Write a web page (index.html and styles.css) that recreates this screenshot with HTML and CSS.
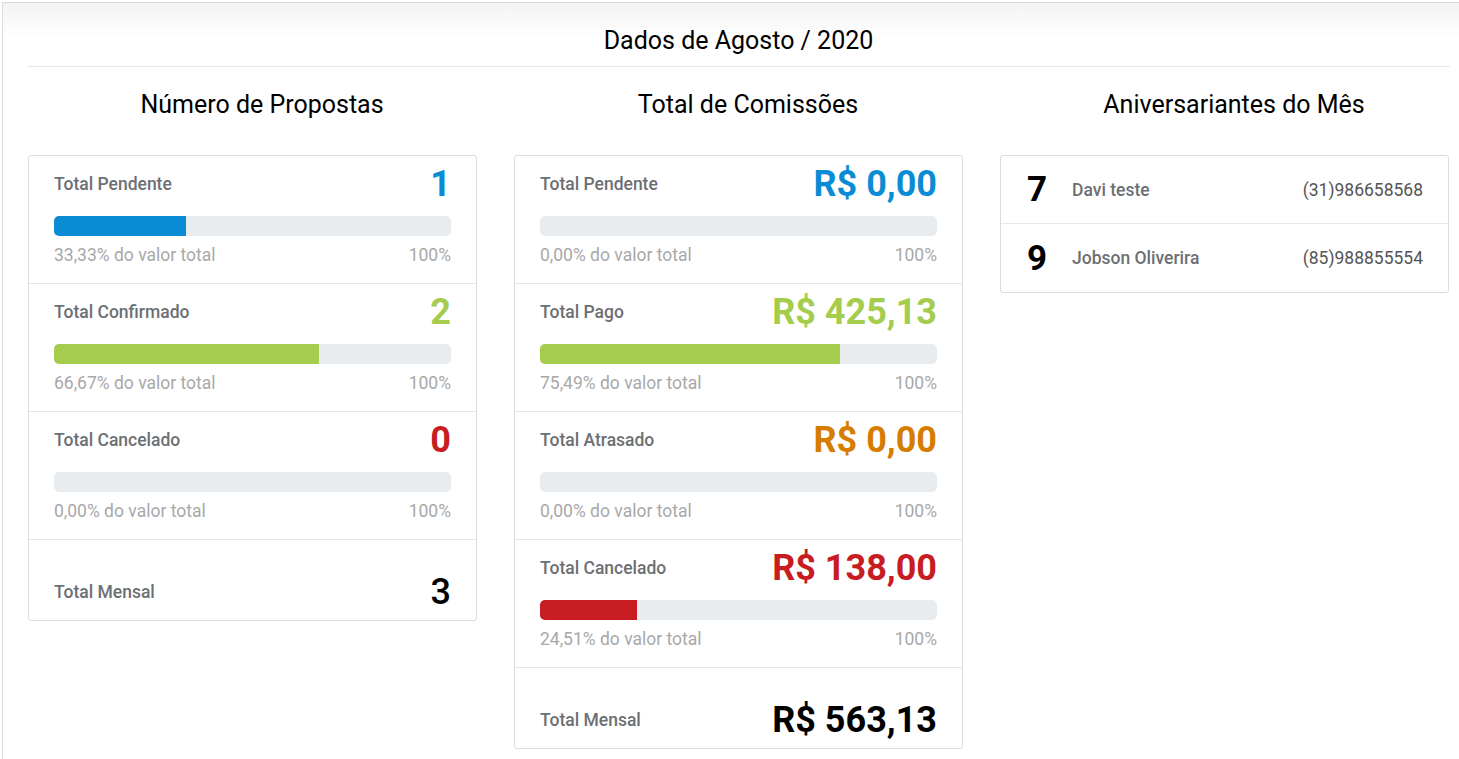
FILE: index.html
```html
<!DOCTYPE html>
<html lang="pt-BR">
<head>
<meta charset="utf-8">
<title>Dados de Agosto / 2020</title>
<link rel="stylesheet" href="styles.css">
</head>
<body>
<div class="frame">
  <div class="frame-title">Dados de Agosto / 2020</div>
  <div class="columns">
    <section class="col">
      <h2 class="col-title">Número de Propostas</h2>
      <div class="card">
        <div class="row">
          <div class="row-head"><span class="label">Total Pendente</span><span class="value blue">1</span></div>
          <div class="bar"><div class="fill bg-blue" style="width:33.33%"></div></div>
          <div class="row-foot"><span>33,33% do valor total</span><span>100%</span></div>
        </div>
        <div class="row">
          <div class="row-head"><span class="label">Total Confirmado</span><span class="value green">2</span></div>
          <div class="bar"><div class="fill bg-green" style="width:66.67%"></div></div>
          <div class="row-foot"><span>66,67% do valor total</span><span>100%</span></div>
        </div>
        <div class="row">
          <div class="row-head"><span class="label">Total Cancelado</span><span class="value red">0</span></div>
          <div class="bar"><div class="fill bg-red" style="width:0%"></div></div>
          <div class="row-foot"><span>0,00% do valor total</span><span>100%</span></div>
        </div>
        <div class="row total">
          <span class="label">Total Mensal</span><span class="value total-count">3</span>
        </div>
      </div>
    </section>
    <section class="col">
      <h2 class="col-title">Total de Comissões</h2>
      <div class="card">
        <div class="row">
          <div class="row-head"><span class="label">Total Pendente</span><span class="value blue">R$ 0,00</span></div>
          <div class="bar"><div class="fill bg-blue" style="width:0%"></div></div>
          <div class="row-foot"><span>0,00% do valor total</span><span>100%</span></div>
        </div>
        <div class="row">
          <div class="row-head"><span class="label">Total Pago</span><span class="value green">R$ 425,13</span></div>
          <div class="bar"><div class="fill bg-green" style="width:75.49%"></div></div>
          <div class="row-foot"><span>75,49% do valor total</span><span>100%</span></div>
        </div>
        <div class="row">
          <div class="row-head"><span class="label">Total Atrasado</span><span class="value orange">R$ 0,00</span></div>
          <div class="bar"><div class="fill bg-orange" style="width:0%"></div></div>
          <div class="row-foot"><span>0,00% do valor total</span><span>100%</span></div>
        </div>
        <div class="row">
          <div class="row-head"><span class="label">Total Cancelado</span><span class="value red">R$ 138,00</span></div>
          <div class="bar"><div class="fill bg-red" style="width:24.51%"></div></div>
          <div class="row-foot"><span>24,51% do valor total</span><span>100%</span></div>
        </div>
        <div class="row total">
          <span class="label">Total Mensal</span><span class="value total-money">R$ 563,13</span>
        </div>
      </div>
    </section>
    <section class="col">
      <h2 class="col-title">Aniversariantes do Mês</h2>
      <div class="card">
        <div class="bday">
          <span class="day">7</span><span class="name">Davi teste</span><span class="phone">(31)986658568</span>
        </div>
        <div class="bday">
          <span class="day">9</span><span class="name">Jobson Oliverira</span><span class="phone">(85)988855554</span>
        </div>
      </div>
    </section>
  </div>
</div>
</body>
</html>
```

FILE: styles.css
```css
* { box-sizing: border-box; }
html, body { margin: 0; padding: 0; }
body {
  background: #fff;
  font-family: Roboto, "Liberation Sans", Arial, sans-serif;
  color: #000;
  overflow: hidden;
}
.frame {
  margin: 2px 0 0 2px;
  width: 1472px;
  height: 757px;
  overflow: hidden;
  border: 1px solid #dcdcdc;
  border-right: none;
  border-bottom: none;
  padding: 0 25px;
  background: linear-gradient(to bottom, #f3f3f3 0px, #ffffff 36px);
}
.frame-title {
  height: 64px;
  padding-top: 23px;
  text-align: center;
  font-size: 25px;
  line-height: 29px;
  border-bottom: 1px solid #e6e6e6;
  margin: 0 -1px;
}
.columns {
  display: grid;
  grid-template-columns: 449px 449px 449px;
  column-gap: 37px;
}
.col-title {
  margin: 25px 0 37px;
  padding-left: 19px;
  font-size: 25px;
  font-weight: 400;
  line-height: 26px;
  text-align: center;
}
.card {
  border: 1px solid #dcdcdc;
  border-radius: 3px;
  background: #fff;
}
.row {
  height: 128px;
  padding: 6px 25px 0;
  border-bottom: 1px solid #e6e6e6;
}
.row:last-child { border-bottom: none; }
.row-head {
  display: flex;
  justify-content: space-between;
  align-items: center;
  height: 44px;
}
.label {
  font-size: 17.5px;
  font-weight: 500;
  color: #6c6f74;
}
.value {
  font-size: 36px;
  font-weight: 700;
  line-height: 44px;
}
.blue { color: #0a8cd4; }
.green { color: #a4cd4d; }
.orange { color: #d67d00; }
.red { color: #c71c22; }
.bar {
  margin-top: 10px;
  height: 20px;
  border-radius: 5px;
  background: #e9ecef;
  overflow: hidden;
}
.fill { height: 100%; }
.bg-blue { background: #0a8cd4; }
.bg-green { background: #a4cd4d; }
.bg-orange { background: #d67d00; }
.bg-red { background: #c71c22; }
.row-foot {
  display: flex;
  justify-content: space-between;
  margin-top: 7px;
  font-size: 17.5px;
  line-height: 24px;
  color: #a8a8a8;
}
.row.total {
  height: 80px;
  display: flex;
  justify-content: space-between;
  align-items: center;
  padding-top: 24px;
  padding-bottom: 0;
}
.total-count { font-weight: 500; color: #000; }
.total-money { font-weight: 700; color: #000; }
.bday {
  display: flex;
  align-items: center;
  height: 68px;
  padding: 0 25px 0 26px;
  border-bottom: 1px solid #e6e6e6;
}
.bday:last-child { border-bottom: none; height: 68px; }
.day {
  width: 45px;
  font-size: 35px;
  font-weight: 700;
  text-align: left;
}
.name {
  flex: 1;
  font-size: 17.5px;
  font-weight: 500;
  color: #6c6f74;
}
.phone {
  font-size: 17.5px;
  color: #555;
}
```
